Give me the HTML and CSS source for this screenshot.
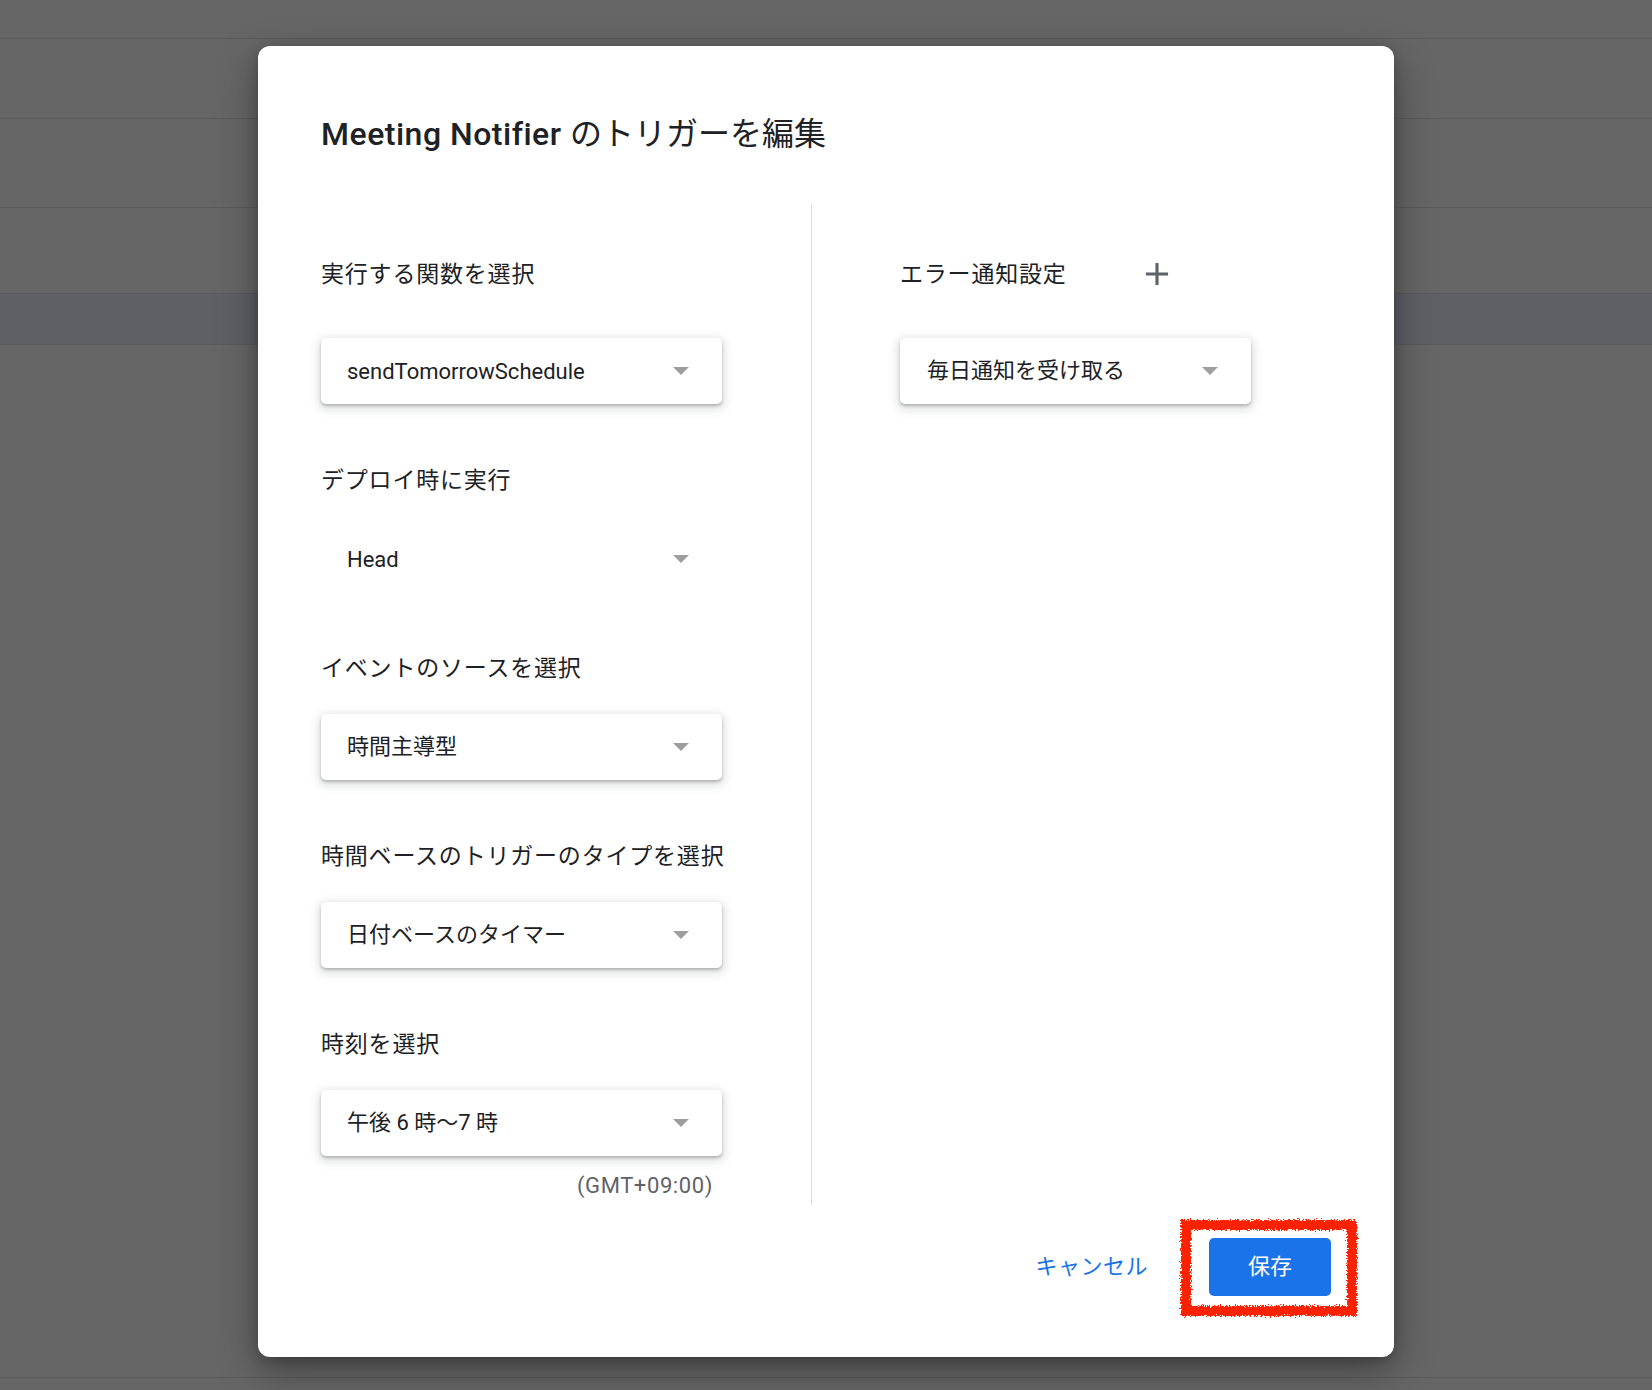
FILE: index.html
```html
<!DOCTYPE html>
<html lang="ja">
<head>
    <meta charset="UTF-8">
    <meta name="viewport" content="width=device-width, initial-scale=1.0">
    <title>Meeting Notifier のトリガーを編集</title>
    <link rel="stylesheet" href="styles.css">
</head>
<body>
    <div class="backdrop">
        <div class="bg-row row-a"></div>
        <div class="bg-row row-b"></div>
        <div class="bg-row row-c"></div>
        <div class="bg-row row-d"></div>
        <div class="bg-row row-band"></div>
        <div class="bg-row row-f"></div>
    </div>

    <div class="dialog">
        <h1 class="title">Meeting Notifier <span class="title-ja">のトリガーを編集</span></h1>

        <div class="columns">
            <div class="col col-left">
                <div class="field">
                    <div class="field-head">実行する関数を選択</div>
                    <div class="select">
                        <span>sendTomorrowSchedule</span>
                        <span class="arrow"></span>
                    </div>
                </div>

                <div class="field">
                    <div class="label">デプロイ時に実行</div>
                    <div class="select flat">
                        <span>Head</span>
                        <span class="arrow"></span>
                    </div>
                </div>

                <div class="field">
                    <div class="label">イベントのソースを選択</div>
                    <div class="select">
                        <span class="ja">時間主導型</span>
                        <span class="arrow"></span>
                    </div>
                </div>

                <div class="field">
                    <div class="label">時間ベースのトリガーのタイプを選択</div>
                    <div class="select">
                        <span class="ja">日付ベースのタイマー</span>
                        <span class="arrow"></span>
                    </div>
                </div>

                <div class="field">
                    <div class="label">時刻を選択</div>
                    <div class="select">
                        <span class="ja">午後 6 時～7 時</span>
                        <span class="arrow"></span>
                    </div>
                    <div class="timezone">(GMT+09:00)</div>
                </div>
            </div>

            <div class="col col-right">
                <div class="field">
                    <div class="field-head">
                        エラー通知設定
                        <button class="icon-btn" title="追加">
                            <svg width="38" height="38" viewBox="0 0 24 24"><path d="M19 13h-6v6h-2v-6H5v-2h6V5h2v6h6v2z" fill="#5f6368"/></svg>
                        </button>
                    </div>
                    <div class="select narrow">
                        <span class="ja">毎日通知を受け取る</span>
                        <span class="arrow"></span>
                    </div>
                </div>
            </div>
        </div>

        <div class="footer">
            <button class="btn-text">キャンセル</button>
            <div class="save-wrap">
                <button class="btn-primary">保存</button>
                <!-- hand-drawn highlight from the screenshot -->
                <svg class="scribble" width="182" height="101" viewBox="0 0 182 101">
                    <filter id="rough">
                        <feTurbulence type="fractalNoise" baseFrequency="0.8" numOctaves="2" result="noise"/>
                        <feDisplacementMap in="SourceGraphic" in2="noise" scale="7"/>
                    </filter>
                    <rect x="8" y="8" width="166" height="86" fill="none" stroke="#ff2400" stroke-width="10" filter="url(#rough)"/>
                </svg>
            </div>
        </div>
    </div>
</body>
</html>
```

FILE: styles.css
```css
body {
    margin: 0;
    background-color: #666666;
    font-family: Roboto, "Noto Sans CJK JP", sans-serif;
    color: #202124;
    overflow: hidden;
}
.backdrop {
    height: 1390px;
}
.bg-row {
    border-bottom: 1px solid #5a5a5a;
}
.row-a { height: 38px; }
.row-b { height: 79px; }
.row-c { height: 88px; }
.row-d { height: 85px; }
.row-band {
    height: 50px;
    background-color: #5f6066;
}
.row-f { height: 1032px; }

.dialog {
    position: absolute;
    left: 258px;
    top: 46px;
    width: 1136px;
    box-sizing: border-box;
    padding: 68px 63px 61px;
    background: #fff;
    border-radius: 12px;
    box-shadow: 0 14px 40px rgba(0,0,0,0.35), 0 4px 12px rgba(0,0,0,0.2);
}
.title {
    margin: 0 0 50px;
    font-size: 32px;
    line-height: 40px;
    font-weight: 500;
    letter-spacing: 0.5px;
    color: #202124;
}
.title-ja {
    font-weight: 400;
    letter-spacing: 0;
}
.columns {
    display: flex;
}
.col {
    padding-top: 42px;
}
.col-left {
    width: 491px;
    box-sizing: border-box;
    padding-bottom: 6px;
    border-right: 1px solid #dadce0;
}
.col-right {
    padding-left: 88px;
}
.field {
    margin-top: 61px;
}
.field:first-child {
    margin-top: 0;
}
.field-head, .label {
    font-size: 23px;
    letter-spacing: 0.8px;
    color: #202124;
}
.field-head {
    display: flex;
    align-items: center;
    height: 56px;
    box-sizing: border-box;
    padding-bottom: 4px;
    margin-bottom: 36px;
}
.label {
    height: 32px;
    line-height: 32px;
    margin-bottom: 29px;
}
.icon-btn {
    display: flex;
    align-items: center;
    justify-content: center;
    width: 48px;
    height: 48px;
    margin-left: 66px;
    margin-top: 4px;
    padding: 0;
    border: none;
    background: none;
    cursor: pointer;
}
.select {
    display: flex;
    align-items: center;
    justify-content: space-between;
    width: 401px;
    height: 66px;
    box-sizing: border-box;
    padding: 0 33px 0 26px;
    background: #fff;
    border-radius: 5px;
    font-size: 22px;
    color: #202124;
    box-shadow: 0 2px 3px rgba(60,64,67,0.3), 0 3px 10px 3px rgba(60,64,67,0.15);
}
.select .ja {
    padding-bottom: 6px;
}
.select.flat {
    box-shadow: none;
}
.select.narrow {
    width: 351px;
    padding-left: 27px;
}
.arrow {
    width: 0;
    height: 0;
    border-left: 8px solid transparent;
    border-right: 8px solid transparent;
    border-top: 8px solid #9e9e9e;
}
.timezone {
    margin-top: 17px;
    height: 26px;
    line-height: 26px;
    width: 401px;
    box-sizing: border-box;
    padding-right: 9px;
    text-align: right;
    font-size: 22px;
    letter-spacing: 0.6px;
    color: #5f6368;
}
.footer {
    display: flex;
    justify-content: flex-end;
    align-items: center;
    margin-top: 33px;
}
.btn-text {
    height: 58px;
    padding: 0 23px 6px;
    margin-right: 38px;
    border: none;
    background: none;
    font-family: inherit;
    font-size: 22px;
    letter-spacing: 0.5px;
    color: #1a73e8;
    cursor: pointer;
}
.save-wrap {
    position: relative;
}
.btn-primary {
    display: block;
    width: 122px;
    height: 58px;
    padding: 0 0 6px;
    border: none;
    border-radius: 5px;
    background-color: #1a73e8;
    color: #fff;
    font-family: inherit;
    font-size: 22px;
    cursor: pointer;
}
.scribble {
    position: absolute;
    left: -31px;
    top: -21px;
    pointer-events: none;
}
```
